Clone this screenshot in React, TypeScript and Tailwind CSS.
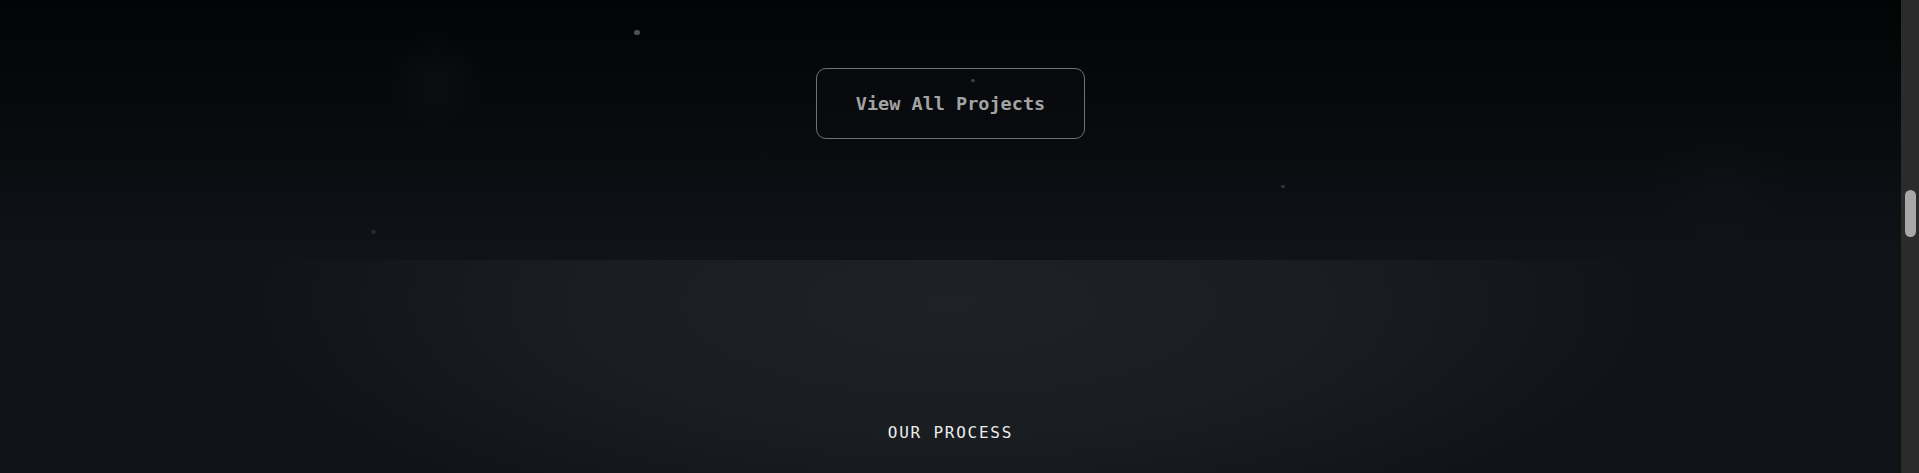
import React from "react";

const dots = [
  { left: 634, top: 30, size: 6, opacity: 0.3 },
  { left: 971, top: 79, size: 4, opacity: 0.22 },
  { left: 1281, top: 185, size: 4, opacity: 0.16 },
  { left: 371, top: 230, size: 5, opacity: 0.1 },
];

export default function App() {
  return (
    <div className="flex h-[473px] w-full overflow-hidden bg-[#0d1014]" style={{ fontFamily: '"DejaVu Sans Mono", monospace' }}>
      <div className="flex min-w-0 flex-1 flex-col">
        <section className="relative flex h-[260px] shrink-0 flex-col items-center bg-gradient-to-b from-[#030405] to-[#101318] pt-[68px]">
          <div className="pointer-events-none absolute left-[385px] top-[30px] h-[100px] w-[100px] rounded-full bg-[radial-gradient(circle,rgba(255,255,255,0.022)_0%,rgba(255,255,255,0.008)_50%,transparent_70%)]" />
          <div className="pointer-events-none absolute left-[1640px] top-[130px] h-[120px] w-[160px] rounded-full bg-[radial-gradient(ellipse,rgba(255,255,255,0.01)_0%,transparent_70%)]" />
          {dots.map((d, i) => (
            <span
              key={i}
              className="pointer-events-none absolute rounded-full bg-white"
              style={{ left: d.left, top: d.top, width: d.size, height: d.size - 1, opacity: d.opacity }}
            />
          ))}
          <button className="flex h-[71px] w-[269px] items-center justify-center rounded-[10px] border border-[#6e7176] bg-[#0a0c0f]/60 text-[18.5px] font-bold text-[#a3a3a3]">
            View All Projects
          </button>
        </section>
        <section className="flex flex-1 flex-col items-center bg-[radial-gradient(ellipse_38%_120%_at_50%_20%,#1e2226_0%,#191d21_55%,#0f1216_100%)] pt-[161px]">
          <h2 className="text-[16px] font-medium leading-6 tracking-[0.11em] text-[#ececec]">OUR PROCESS</h2>
        </section>
      </div>
      <div className="flex w-[18px] shrink-0 justify-center bg-[#2b2b2b] pt-[190px]">
        <div className="h-[47px] w-[11px] rounded-full bg-[#a8a8a8]" />
      </div>
    </div>
  );
}
